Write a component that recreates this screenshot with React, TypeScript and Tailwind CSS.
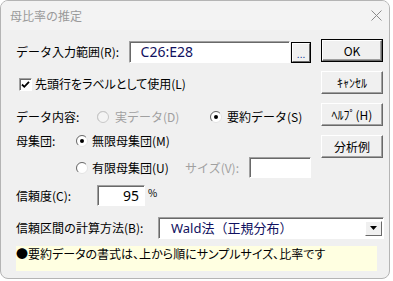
import React from 'react';

const Btn = ({ children, def }: { children: React.ReactNode; def?: boolean }) => (
  <div className={`w-[62px] h-[23px] ${def ? 'border border-black' : ''}`}>
    <div className="w-full h-full flex items-center justify-center bg-[#f0f0f0] border border-t-white border-l-white border-b-[#696969] border-r-[#696969] shadow-[inset_-1px_-1px_0_#a0a0a0] text-[12px]">
      {children}
    </div>
  </div>
);

const Sunken = ({ className, children }: { className: string; children?: React.ReactNode }) => (
  <div className={`bg-white border border-t-[#a0a0a0] border-l-[#a0a0a0] border-b-white border-r-white shadow-[inset_1px_1px_0_#696969] ${className}`}>
    {children}
  </div>
);

const Radio = ({ checked, disabled }: { checked?: boolean; disabled?: boolean }) => (
  <svg width="12" height="12" viewBox="0 0 12 12" className="shrink-0">
    <circle cx="6" cy="6" r="5.5" fill={disabled ? '#f4f4f4' : 'white'} stroke={disabled ? '#c8c8c8' : '#e3e3e3'} />
    <path d="M2.1 9.9 A5.5 5.5 0 0 1 9.9 2.1" fill="none" stroke={disabled ? '#c8c8c8' : '#6a6a6a'} />
    {checked && <circle cx="6" cy="6" r="2" fill="black" />}
  </svg>
);

const Checkbox = () => (
  <div className="w-[13px] h-[13px] bg-white border border-t-[#a0a0a0] border-l-[#a0a0a0] border-b-white border-r-white shadow-[inset_1px_1px_0_#696969] flex items-center justify-center">
    <svg width="9" height="9" viewBox="0 0 9 9">
      <path d="M1 4.5 L3.3 6.8 L8 1.8" fill="none" stroke="black" strokeWidth="1.8" />
    </svg>
  </div>
);

export default function App() {
  return (
    <div className="w-[393px] h-[281px] bg-white font-['Noto_Sans_CJK_JP',sans-serif] text-[12px] text-black leading-none">
      <div className="w-[390px] h-[279px] rounded-[8px] border border-[#b4b4b4] bg-[#f0f0f0] overflow-hidden flex flex-col">
        <div className="h-[29px] shrink-0 bg-[#f3f3f3] flex items-center justify-between pl-[9px] pr-[7px]">
          <span className="text-[12px] text-[#9a9a9a]">母比率の推定</span>
          <svg width="11" height="11" viewBox="0 0 11 11">
            <path d="M0.5 0.5 L10.5 10.5 M10.5 0.5 L0.5 10.5" stroke="#8a8a8a" strokeWidth="1" />
          </svg>
        </div>

        <div className="flex-1 pl-[15px] flex flex-col">
          <div className="flex">
            <div className="w-[295px] flex flex-col">
              <div className="mt-[11px] h-[22px] flex items-center">
                <span className="w-[113px]">データ入力範囲(R):</span>
                <Sunken className="w-[162px] h-[22px] flex items-center pl-[11px]">
                  <span className="font-['Noto_Sans',sans-serif] text-[14px] text-[#101060]">C26:E28</span>
                </Sunken>
                <div className="ml-[1px] w-[20px] h-[21px] border border-black">
                  <div className="w-full h-full bg-[#f0f0f0] border border-t-white border-l-white border-b-[#696969] border-r-[#696969] flex items-end justify-center pb-[2px]">
                    <span className="text-[10px] text-[#1a3a9a] leading-none">...</span>
                  </div>
                </div>
              </div>

              <div className="mt-[13px] h-[16px] flex items-center">
                <div className="ml-[3px]">
                  <Checkbox />
                </div>
                <span className="ml-[3px] [font-feature-settings:'palt']">先頭行をラベルとして使用(L)</span>
              </div>

              <div className="mt-[17px] h-[16px] flex items-center">
                <span className="w-[81px]">データ内容:</span>
                <div className="w-[113px] flex items-center gap-[6px]">
                  <Radio disabled />
                  <span className="text-[#a0a0a0]">実データ(D)</span>
                </div>
                <div className="flex items-center gap-[5px]">
                  <Radio checked />
                  <span>要約データ(S)</span>
                </div>
              </div>

              <div className="mt-[8px] h-[16px] flex items-center">
                <span className="w-[60px]">母集団:</span>
                <div className="flex items-center gap-[4px]">
                  <Radio checked />
                  <span>無限母集団(M)</span>
                </div>
              </div>

              <div className="mt-[8px] h-[21px] flex items-center">
                <div className="ml-[60px] w-[109px] flex items-center gap-[4px]">
                  <Radio />
                  <span>有限母集団(U)</span>
                </div>
                <span className="w-[64px] text-[#a0a0a0]">サイズ(V):</span>
                <Sunken className="w-[62px] h-[21px]" />
              </div>
            </div>

            <div className="ml-[10px] mt-[9px] flex flex-col gap-[9px]">
              <Btn def>OK</Btn>
              <Btn>ｷｬﾝｾﾙ</Btn>
              <Btn>ﾍﾙﾌﾟ(H)</Btn>
              <Btn>分析例</Btn>
            </div>
          </div>

          <div className="mt-[7px] h-[21px] flex items-center">
            <span className="w-[81px]">信頼度(C):</span>
            <Sunken className="w-[48px] h-[21px] flex items-center justify-end pr-[5px]">
              <span className="font-['Noto_Sans',sans-serif] text-[14px]">95</span>
            </Sunken>
            <span className="ml-[3px] self-start mt-[3px] text-[10px]">%</span>
          </div>

          <div className="mt-[11px] h-[22px] flex items-center">
            <span className="w-[142px]">信頼区間の計算方法(B):</span>
            <Sunken className="w-[226px] h-[22px] flex items-center pl-[12px] pr-[1px]">
              <span className="flex-1 text-[13px] text-[#101060]">
                <span className="font-['Noto_Sans',sans-serif]">Wald</span>法（正規分布）
              </span>
              <div className="w-[17px] h-[15px] bg-[#f0f0f0] border border-t-white border-l-white border-b-[#696969] border-r-[#696969] flex items-center justify-center">
                <svg width="7" height="4" viewBox="0 0 7 4">
                  <path d="M0 0 L7 0 L3.5 4 Z" fill="black" />
                </svg>
              </div>
            </Sunken>
          </div>

          <div className="mt-[7px] w-[361px] h-[25px] bg-[#ffffe1] pt-[2px]">
            <span className="text-[12px] [font-feature-settings:'palt']">●要約データの書式は、上から順にサンプルサイズ、比率です</span>
          </div>
        </div>
      </div>
    </div>
  );
}
